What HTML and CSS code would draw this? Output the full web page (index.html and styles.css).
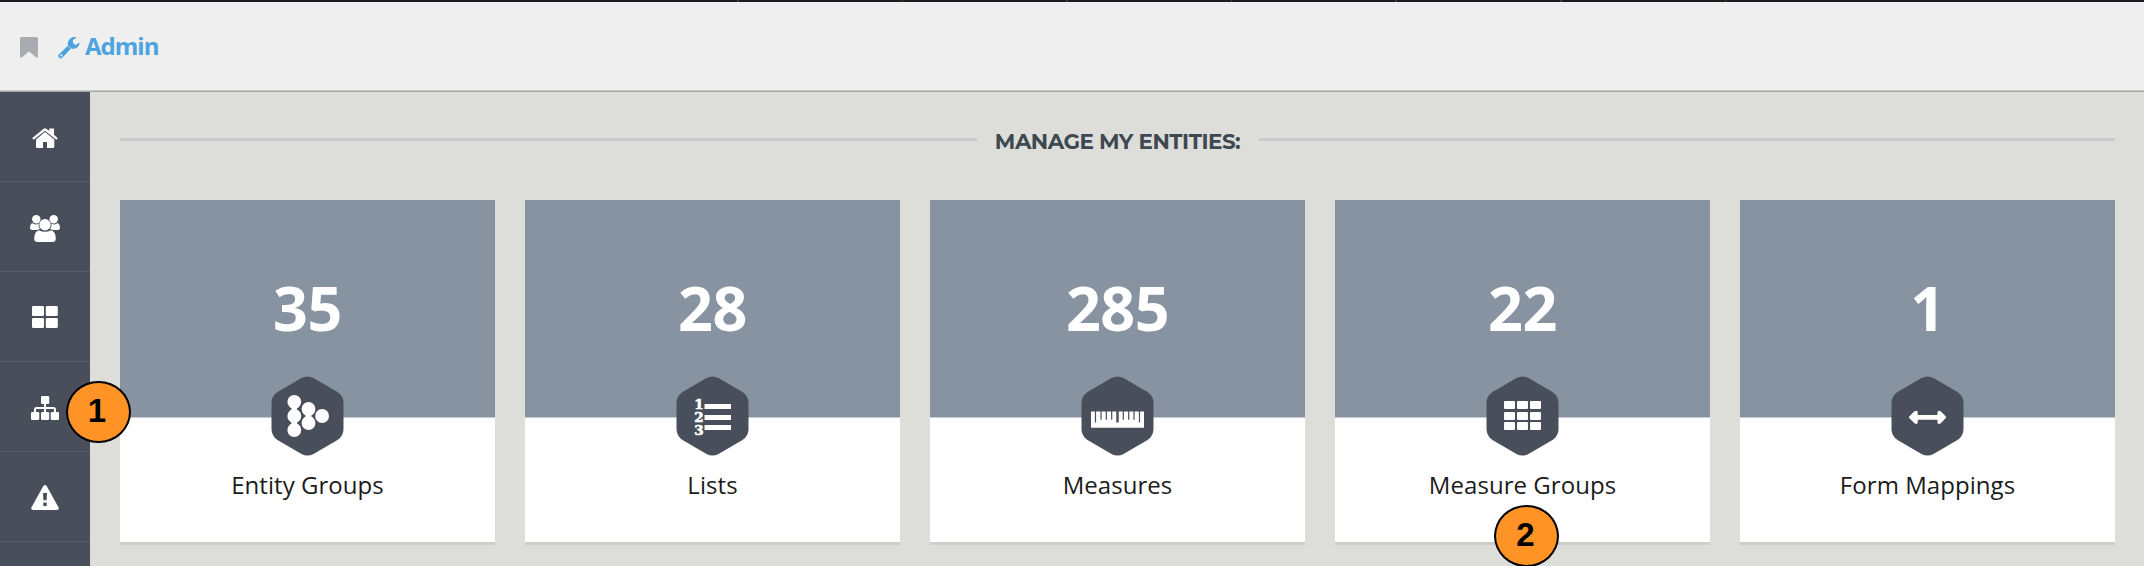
FILE: index.html
```html
<!DOCTYPE html>
<html lang="en">
<head>
<meta charset="utf-8">
<title>Admin</title>
<link rel="stylesheet" href="styles.css">
</head>
<body>
<div class="topstrip"></div>
<header class="header">
  <svg class="bookmark" viewBox="0 0 18 21"><path d="M1.500 0h15Q18 0 18 1.500V19.500Q17.600 21 16 20.300L9 14.500L2 20.300Q.4 21 0 19.500V1.500Q0 0 1.500 0z"/></svg>
  <svg class="wrench" viewBox="0 0 22 22"><path fill-rule="evenodd" d="M18.500 .7L14.900 3L15.200 6.500L17.700 8L21 5.800Q21.800 6 21.200 7.800C19.800 11.300 16.200 12.400 13 11.400L4.800 20.300C3.300 21.800 2.200 21.700 1 20.500C-.2 19.300 0 18.400 1 17.300L10 8.800C9 4.500 12 .3 16 .1Q18.300 0 18.500 .7zM3.300 17.300a1.100 1.100 0 1 0 .01 0z"/><path class="seam" d="M10 8.700L13.300 12"/></svg>
  <h1 class="title">Admin</h1>
</header>
<div class="shell">
  <nav class="sidebar">
    <a class="nav-item"><svg width="26" height="20" viewBox="0 0 26 20"><path d="M13 4L22.300 11.500V18.500Q22.300 20 20.800 20H15V14H11V20H5.200Q4 20 4 18.800V11.500z"/><path d="M11.700 .7Q13 -.3 14.300 .7L17.300 3V.5H22V6.800L25.700 10Q25.800 10.800 24.300 11.700L13 2.800L1.700 11.700Q.2 10.800 .3 10z"/></svg></a>
    <a class="nav-item"><svg width="30" height="27" viewBox="0 0 30 27"><circle cx="6.300" cy="4.300" r="4.200"/><circle cx="23.700" cy="4.300" r="4.200"/><path d="M2 8Q5.500 10.500 8.500 8.500Q8 12 10 13.500Q8.500 15 6 15H2.500Q0 15 0 12.500Q.1 9 2 8zM28 8Q24.500 10.500 21.500 8.500Q22 12 20 13.500Q21.500 15 24 15H27.500Q30 15 30 12.500Q29.900 9 28 8z"/><circle cx="15" cy="9.700" r="5.700"/><path d="M9 15.200Q15 18.500 21 15.200Q25.800 16.500 25.800 23.500Q25.800 27 22.500 27H7.500Q4.200 27 4.200 23.500Q4.200 16.500 9 15.200z"/></svg></a>
    <a class="nav-item windows"><svg width="26" height="22" viewBox="0 0 26 22"><rect width="12" height="10" rx="1.300"/><rect x="13.800" width="12" height="10" rx="1.300"/><rect y="12" width="12" height="10" rx="1.300"/><rect x="13.800" y="12" width="12" height="10" rx="1.300"/></svg></a>
    <a class="nav-item"><svg width="28" height="24" viewBox="0 0 28 24"><rect x="10" width="8.200" height="8" rx="1.300"/><rect y="16" width="8.300" height="8" rx="1.300"/><rect x="10" y="16" width="8.200" height="8" rx="1.300"/><rect x="19.700" y="16" width="8.300" height="8" rx="1.300"/><path class="wire" d="M14 7v10M4 17v-3.500Q4 12 5.500 12H22.500Q24 12 24 13.500V17"/></svg></a>
    <a class="nav-item windows"><svg width="28" height="25" viewBox="0 0 28 25"><path fill-rule="evenodd" d="M12.300 1Q14 -1 15.700 1L27.700 22.800Q28.200 25 26 25H2Q-.2 25 .3 22.800zM12 8L12.400 15.300H15.600L16 8zM12.300 17.500V21H15.700V17.500z"/></svg></a>
    <a class="nav-item"></a>
  </nav>
  <main class="main">
    <div class="section-head"><h2>MANAGE MY ENTITIES:</h2></div>
    <div class="cards">
      <section class="card">
        <div class="count">35</div>
        <svg class="hex" viewBox="0 0 73 80"><path class="hex-bg" d="M30.500 2Q36.500 -1 42.500 2L66.500 16Q72.500 20 72.500 27V53Q72.500 60 66.500 64L42.500 78Q36.500 81 30.500 78L6.500 64Q.5 60 .5 53V27Q.5 20 6.500 16z"/><g transform="translate(.5 0)"><circle cx="22.800" cy="25.800" r="6.900"/><circle cx="22.800" cy="40" r="6.900"/><circle cx="22.800" cy="54" r="6.900"/><circle cx="37" cy="33" r="6.900"/><circle cx="37" cy="47" r="6.900"/><circle cx="50.600" cy="40" r="6.900"/><path d="M18.500 31Q22 33 18.500 35H27Q23.500 33 27 31zM18.500 45Q22 47 18.500 49H27Q23.500 47 27 45zM32.500 38Q36 40 32.500 42H41.500Q38 40 41.500 38z"/></g></svg>
        <div class="label">Entity Groups</div>
      </section>
      <section class="card">
        <div class="count">28</div>
        <svg class="hex" viewBox="0 0 73 80"><path class="hex-bg" d="M30.500 2Q36.500 -1 42.500 2L66.500 16Q72.500 20 72.500 27V53Q72.500 60 66.500 64L42.500 78Q36.500 81 30.500 78L6.500 64Q.5 60 .5 53V27Q.5 20 6.500 16z"/><path d="M28.500 28H55v5H28.500zM28.500 39H55v5H28.500zM28.500 49H55v5H28.500z"/><g class="digits"><text x="18.200" y="33">1</text><text x="18.200" y="46">2</text><text x="18.200" y="58.500">3</text></g></svg>
        <div class="label">Lists</div>
      </section>
      <section class="card">
        <div class="count">285</div>
        <svg class="hex" viewBox="0 0 73 80"><path class="hex-bg" d="M30.500 2Q36.500 -1 42.500 2L66.500 16Q72.500 20 72.500 27V53Q72.500 60 66.500 64L42.500 78Q36.500 81 30.500 78L6.500 64Q.5 60 .5 53V27Q.5 20 6.500 16z"/><path d="M10 35.500h53V51.700H10z"/><path class="ticks" d="M14.500 35v11.500M20 35v8.700M25.300 35v8.700M30.700 35v8.700M42.300 35v8.700M47.700 35v8.700M53 35v8.700M58.500 35v11.500"/><path class="tick-mid" d="M36.500 35v11.500"/></svg>
        <div class="label">Measures</div>
      </section>
      <section class="card">
        <div class="count">22</div>
        <svg class="hex" viewBox="0 0 73 80"><path class="hex-bg" d="M30.500 2Q36.500 -1 42.500 2L66.500 16Q72.500 20 72.500 27V53Q72.500 60 66.500 64L42.500 78Q36.500 81 30.500 78L6.500 64Q.5 60 .5 53V27Q.5 20 6.500 16z"/><g transform="translate(.5 0)"><rect x="17.500" y="25" width="11" height="8" rx="1"/><rect x="30.500" y="25" width="11" height="8" rx="1"/><rect x="43.500" y="25" width="11" height="8" rx="1"/><rect x="17.500" y="36" width="11" height="8" rx="1"/><rect x="30.500" y="36" width="11" height="8" rx="1"/><rect x="43.500" y="36" width="11" height="8" rx="1"/><rect x="17.500" y="46" width="11" height="8" rx="1"/><rect x="30.500" y="46" width="11" height="8" rx="1"/><rect x="43.500" y="46" width="11" height="8" rx="1"/></g></svg>
        <div class="label">Measure Groups</div>
      </section>
      <section class="card">
        <div class="count">1</div>
        <svg class="hex" viewBox="0 0 73 80"><path class="hex-bg" d="M30.500 2Q36.500 -1 42.500 2L66.500 16Q72.500 20 72.500 27V53Q72.500 60 66.500 64L42.500 78Q36.500 81 30.500 78L6.500 64Q.5 60 .5 53V27Q.5 20 6.500 16z"/><path transform="translate(.5 0)" d="M17.700 42Q17 41.300 17.700 40.500L23 35.300Q26.200 34 26.200 36.500V39H46V36.500Q46 34 49.300 35.300L54.300 40.500Q55 41.300 54.300 42L49.300 47.300Q46 49 46 46V43.800H26.200V46Q26.200 49 23 47.300z"/></svg>
        <div class="label">Form Mappings</div>
      </section>
    </div>
  </main>
</div>
<div class="badge badge-one">1</div>
<div class="badge badge-two">2</div>
</body>
</html>
```
FILE: styles.css
```css
* { box-sizing: border-box; }
body {
  margin: 0;
  width: 2144px;
  height: 566px;
  overflow: hidden;
  position: relative;
  background: #dddeda;
  font-family: "Open Sans", sans-serif;
}
svg { display: block; fill: #fff; }
.topstrip {
  height: 2px;
  background: repeating-linear-gradient(90deg, #3d3e48 0 1.500px, #1c1d21 1.500px 164.600px) 736.500px 0 / 1152px 2px no-repeat #1c1d21;
}
.header {
  height: 90px;
  display: flex;
  align-items: flex-start;
  padding-left: 20px;
  background: #efefef;
  border-bottom: 1px solid #a8aaaa;
  box-shadow: inset 0 -1px #c9caca;
}
.bookmark { width: 18px; height: 21px; margin-top: 35px; fill: #a9abb0; }
.wrench { width: 22px; height: 22px; margin: 35px 0 0 20px; fill: #4da3e0; }
.seam { stroke: #efefef; stroke-width: .6; }
.title { margin: 27px 0 0 5px; font-size: 24px; line-height: 33px; font-weight: 700; letter-spacing: -1px; color: #4da3e0; }
.shell { display: flex; height: 474px; }
.sidebar { width: 90px; background: #484f5b; overflow: hidden; }
.nav-item {
  height: 90px;
  padding-top: 3px;
  display: flex;
  align-items: center;
  justify-content: center;
  border-bottom: 1px solid #5a5f66;
}
.windows { padding-top: 1px; }
.wire { fill: none; stroke: #fff; stroke-width: 2; }
.main { flex: 1; padding: 31px 29px 0 30px; }
.section-head { display: flex; align-items: center; height: 36px; }
.section-head::before, .section-head::after {
  content: "";
  flex: 1;
  height: 3px;
  margin-top: -3px;
  background: linear-gradient(#cbcfcd 0 1px, #c2c7c8 1px 2px, #cbcfcd 2px);
}
h2 {
  margin: 0;
  width: 282px;
  text-align: center;
  white-space: nowrap;
  font: 700 21.500px/32px Montserrat, Inter, sans-serif;
  letter-spacing: -.5px;
  color: #3e4851;
  padding-bottom: 1px;
}
.cards { display: grid; grid-template-columns: repeat(5, 375px); gap: 30px; margin-top: 41px; }
.card {
  height: 342px;
  display: flex;
  flex-direction: column;
  align-items: center;
  background: linear-gradient(#8793a1 0 217px, #c3cad0 217px 218px, #fff 218px);
  box-shadow: 0 3px #cdcec9;
}
.count { height: 176px; padding-top: 66px; font-size: 61px; line-height: 83px; font-weight: 700; letter-spacing: -.5px; color: #fff; }
.hex { width: 73px; height: 80px; }
.hex-bg { fill: #484f5b; }
.ticks { stroke: #484f5b; stroke-width: 1.200; }
.tick-mid { stroke: #484f5b; stroke-width: 2.500; }
.digits { font: 700 13.500px "DejaVu Serif", serif; stroke: #fff; stroke-width: .6; }
.label { margin-top: 12px; font-size: 24px; line-height: 33px; font-weight: 400; letter-spacing: .05px; color: #1c1c1c; }
.badge {
  position: absolute;
  width: 65px;
  height: 62px;
  border: 2px solid #000;
  border-radius: 50%;
  background: #ff9326;
  color: #000;
  text-align: center;
  font: 700 33px/56px "Liberation Sans", Arial, sans-serif;
}
.badge-one { left: 66px; top: 381px; padding-right: 3px; }
.badge-two { left: 1494px; top: 505px; padding-right: 2px; }
```
